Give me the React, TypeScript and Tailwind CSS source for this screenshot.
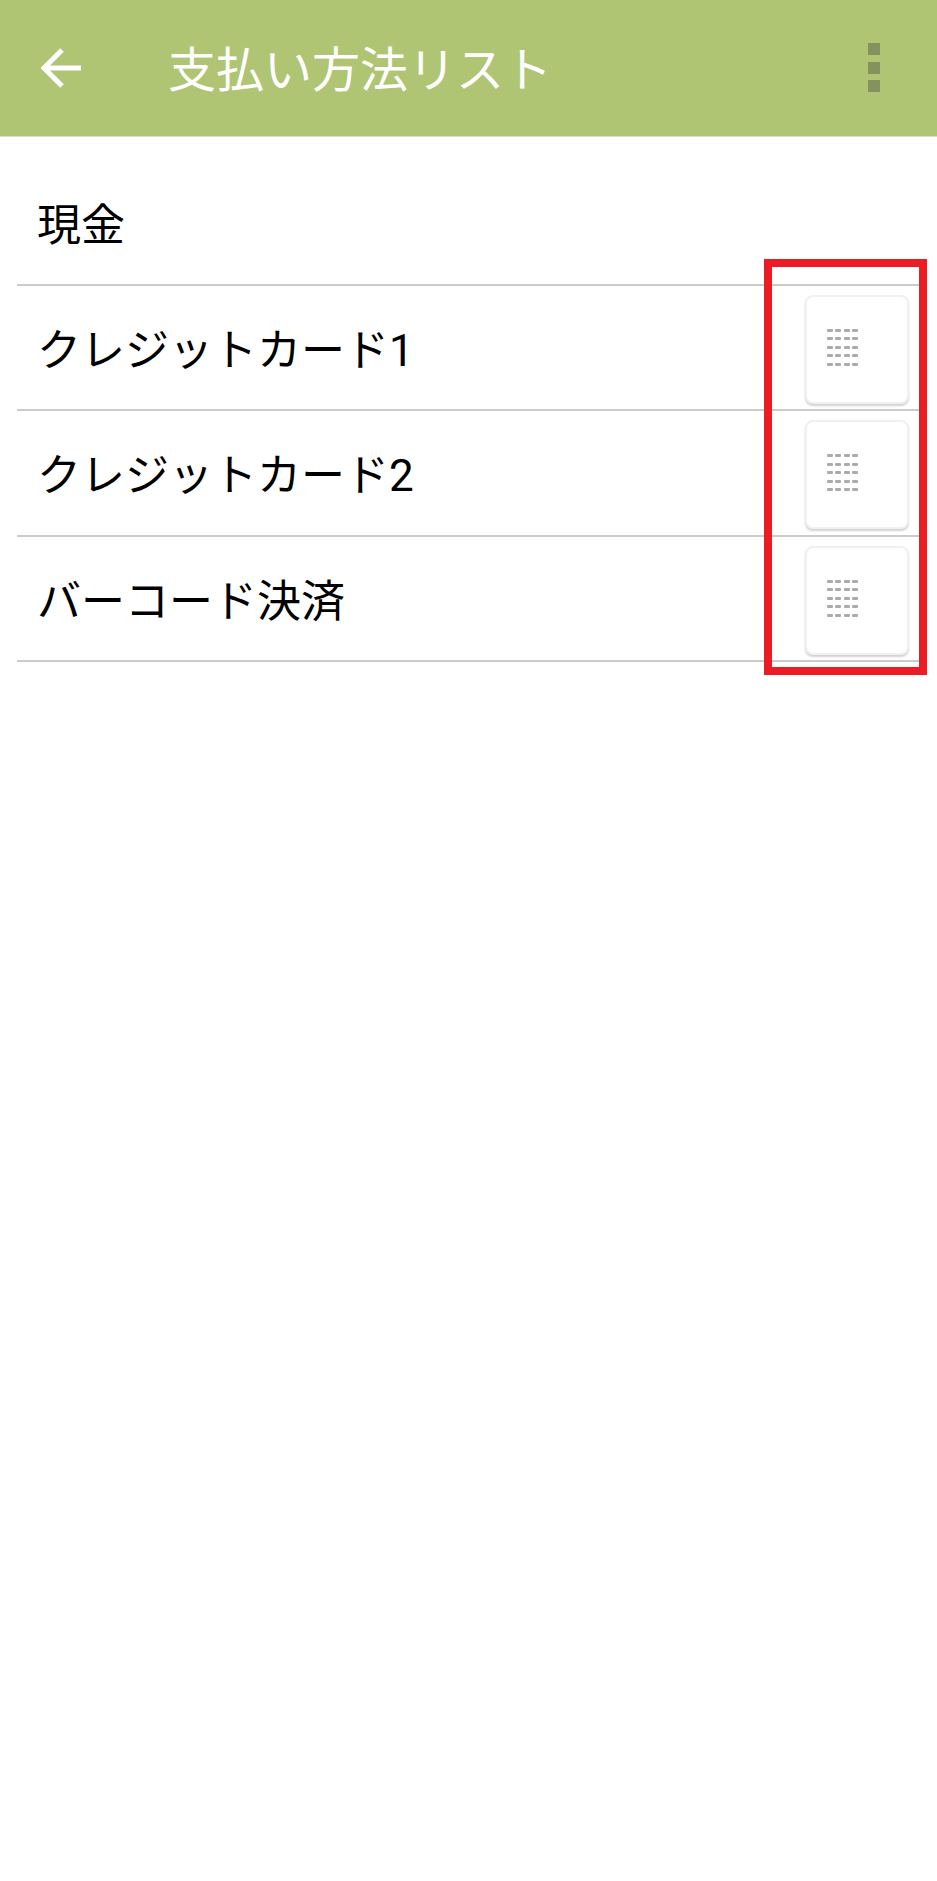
import React from 'react';

const methods = [
  { name: 'クレジットカード1' },
  { name: 'クレジットカード2' },
  { name: 'バーコード決済' },
];

const DragHandle = () => (
  <div className="grid grid-cols-[repeat(4,6px)] grid-rows-[repeat(5,3px)] gap-x-[2.4px] gap-y-[5.6px]">
    {Array.from({ length: 20 }).map((_, i) => (
      <span key={i} className="rounded-[1px] bg-[#ababab]"></span>
    ))}
  </div>
);

const PaymentRow = ({ name }: { name: string }) => (
  <div className="mx-[17px] flex h-[125.5px] items-start border-b-[2px] border-[#cbcbcb] pr-[11px] pt-[9px]">
    <span className="mt-[31px] pl-[20px] text-[44px] leading-[50px] text-black">{name}</span>
    <div className="ml-auto flex h-[109px] w-[104px] rounded-[8px] border-[2px] border-[#f0f0f0] bg-white pl-[20px] pt-[32px] shadow-[0_2px_2px_rgba(0,0,0,0.18)]">
      <DragHandle />
    </div>
  </div>
);

export default function App() {
  return (
    <div className="relative min-h-[1881px] bg-white font-['Roboto','Noto_Sans_CJK_JP',sans-serif]">
      <header className="flex h-[137px] items-center border-b border-[#d9dfc6] bg-[#afc574] pb-[1px]">
        <svg className="ml-[40px] h-[42px] w-[42px]" viewBox="0 0 42 42" fill="none" stroke="white" strokeWidth="5">
          <path d="M41 21H5" />
          <path d="M22 3L4 21L22 39" />
        </svg>
        <h1 className="ml-[86px] mt-[6px] text-[48px] font-normal leading-none text-white">支払い方法リスト</h1>
        <div className="ml-auto mr-[57px] flex flex-col gap-[6.5px]">
          <span className="h-[12px] w-[12px] bg-[#83925f]"></span>
          <span className="h-[12px] w-[12px] bg-[#83925f]"></span>
          <span className="h-[12px] w-[12px] bg-[#83925f]"></span>
        </div>
      </header>
      <main>
        <div className="mx-[17px] h-[148.5px] border-b-[2px] border-[#cbcbcb] pl-[20px] pt-[64px]">
          <span className="text-[44px] leading-[50px] text-black">現金</span>
        </div>
        {methods.map((m) => (
          <PaymentRow key={m.name} name={m.name} />
        ))}
      </main>
      <div className="absolute left-[764px] top-[259px] h-[416px] w-[163px] border-[8px] border-[#ed1c24]"></div>
    </div>
  );
}
